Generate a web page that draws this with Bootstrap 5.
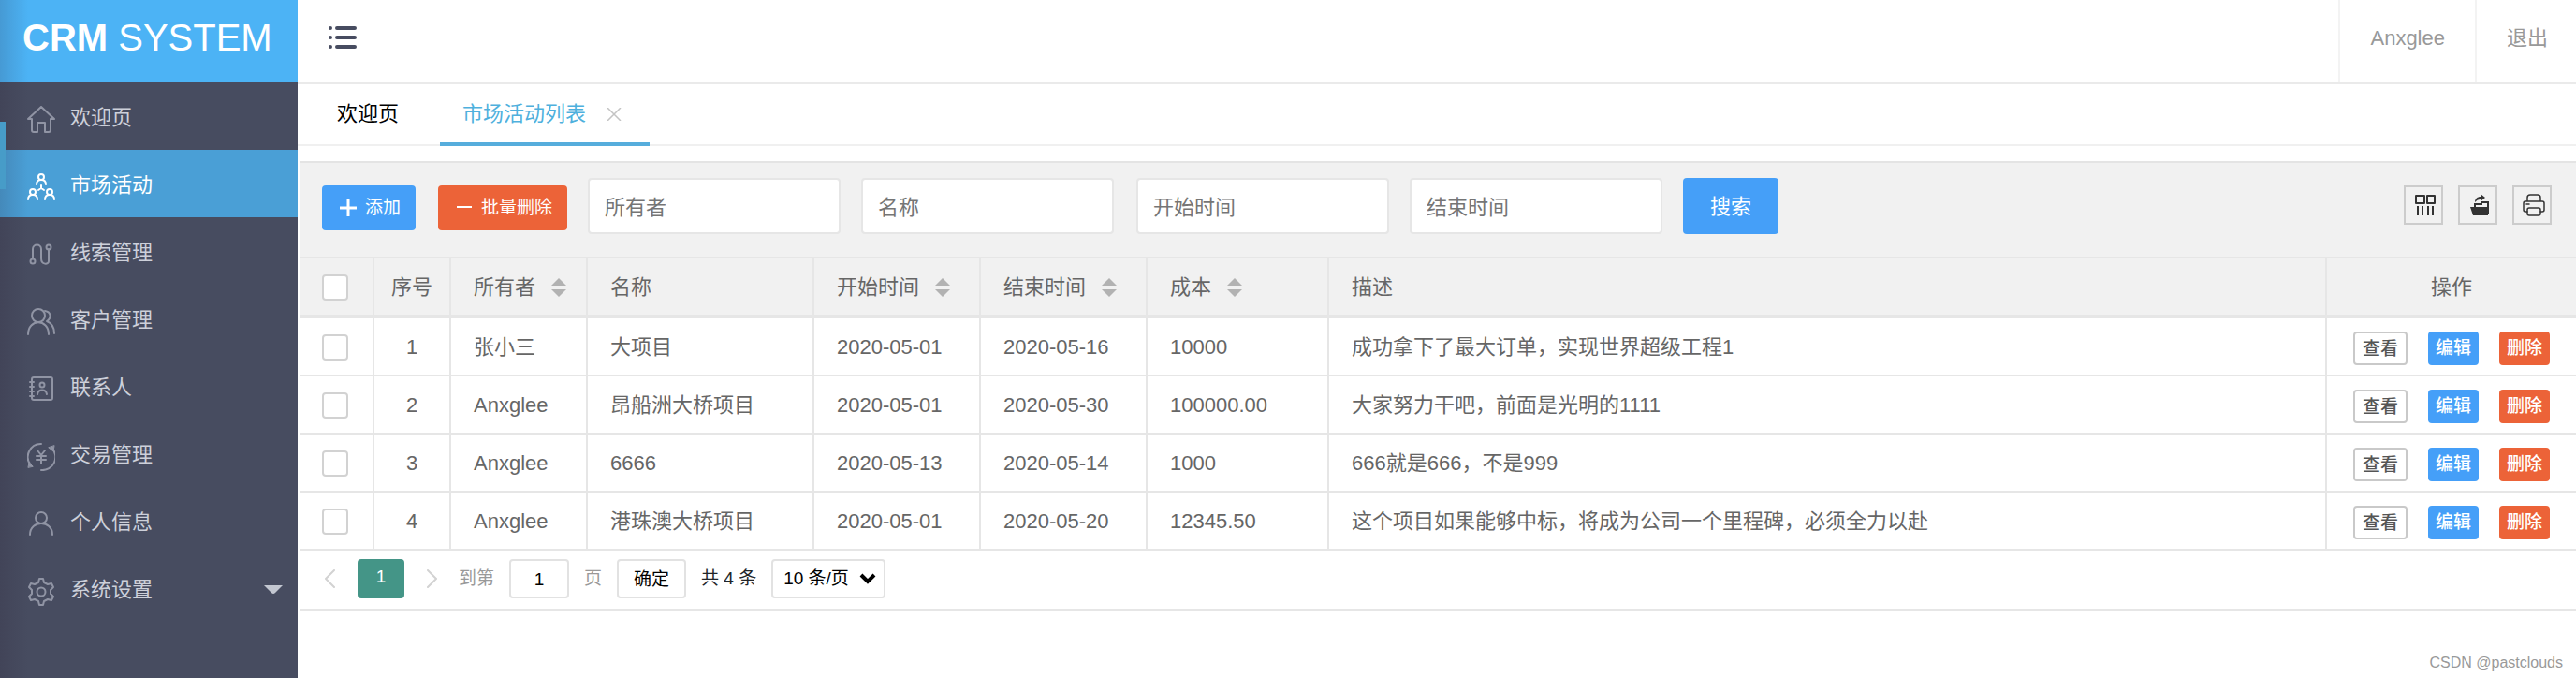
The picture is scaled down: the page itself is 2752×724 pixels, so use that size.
<!DOCTYPE html>
<html lang="zh-CN">
<head>
<meta charset="utf-8">
<meta name="viewport" content="width=device-width, initial-scale=1">
<title>CRM SYSTEM</title>
<link rel="stylesheet" href="https://cdn.jsdelivr.net/npm/bootstrap@5.3.0/dist/css/bootstrap.min.css">
<style>
  body { font-family: "Liberation Sans", "Noto Sans CJK SC", sans-serif; font-size: 22px; line-height: 32px; color: #666; background: #fff; }
  a { text-decoration: none; color: inherit; }
  svg { display: block; flex: none; }
  .line-icon { fill: none; stroke: currentColor; stroke-width: 2; stroke-linecap: round; stroke-linejoin: round; }

  /* sidebar */
  .side-panel { width: 318px; background: #474c60; }
  .side-panel::after { content: ""; position: absolute; inset: 0 auto 0 0; width: 30px; background: linear-gradient(90deg, rgba(40,30,50,.17), rgba(40,30,50,0)); pointer-events: none; }
  .side-logo { height: 88px; padding: 0 24px 8px; font-size: 40px; line-height: 48px; color: #fff; background: #4cb3f5; }
  .side-item { height: 72px; padding: 4px 16px 0 29px; gap: 16px; color: #cdd0da; }
  .side-item .line-icon { color: #9094a4; margin-top: 4px; }
  .side-item.active, .side-item.active .line-icon { color: #fff; }
  .side-item.active { background: #4a9fd6; }
  .side-marker { top: 130px; left: 0; width: 6px; height: 72px; background: #479cc8; z-index: 1; }

  /* top bar and tabs */
  .top-bar { height: 90px; border-bottom: 2px solid #eaeaea; color: #999; }
  .top-link { padding: 0 32px 6px; border-left: 2px solid #f3f3f3; }
  .top-link:last-child { padding-right: 30px; }
  .toggle-btn { padding: 0 33px 8px; color: #474c60; }
  .tab-strip { height: 66px; border-bottom: 2px solid #f0f0f0; padding-left: 18px; color: #000; }
  .tab-entry { padding: 2px 24px 0; height: 66px; border-bottom: 4px solid transparent; }
  .tab-entry.active { color: #4eb0dd; border-color: #56addc; margin-left: 20px; padding-right: 30px; gap: 22px; }
  .tab-close { color: #c4c4c4; }

  /* toolbar */
  .data-view { margin: 16px 0 0 2px; border-top: 2px solid #e4e4e4; }
  .tool-row { min-height: 102px; padding: 16px 26px 24px 24px; background: #f1f1f1; border-bottom: 2px solid #e6e6e6; }
  .act-btn { height: 48px; padding: 0 16px 0 18px; font-size: 19px; line-height: 28px; border: 0; border-radius: 4px; color: #fff; gap: 8px; }
  .act-blue, .act-blue:hover { background: #459ff8; color: #fff; }
  .act-red, .act-red:hover { background: #ec6338; color: #fff; }
  .query-box { width: 270px; height: 60px; padding: 4px 16px 0; border: 2px solid #e6e6e6; border-radius: 4px; font-size: 22px; color: #333; }
  .query-box::placeholder { color: #757575; opacity: 1; }
  .search-btn { width: 102px; height: 60px; padding: 0; font-size: 22px; border: 0; border-radius: 4px; }
  .query-gap { gap: 22px; }
  .sq-btn { width: 42px; height: 42px; padding: 0 0 0 4px; border: 2px solid #ccc; border-radius: 0; color: #333; }

  /* data table */
  .grid-table { table-layout: fixed; border-collapse: separate; border-spacing: 0; margin: 0; }
  .grid-table > :not(caption) > * > * { height: 62px; padding: 2px 24px 0; border: 0 solid #e6e6e6; border-width: 0 2px 2px 0; color: #666; font-weight: 400; vertical-align: middle; background: #fff; box-shadow: none; white-space: nowrap; }
  .grid-table > thead > tr > th { height: 64px; background: #f1f1f1; border-bottom-width: 4px; }
  .grid-table > :not(caption) > tr > :last-child { border-right: 0; }
  .grid-table > :not(caption) > tr > .num-cell { padding: 2px 0 0; text-align: center; }
  .grid-table .form-check-input { display: block; width: 28px; height: 28px; margin: 0; border: 2px solid #d2d2d2; border-radius: 4px; background-color: #fff; }
  .sort-mark { fill: #b2b2b2; }
  .row-ops { gap: 22px; padding-top: 2px; }
  .row-ops .btn { width: 54px; height: 36px; padding: 0; font-size: 19px; line-height: 28px; border: 0; border-radius: 4px; font-weight: 500; }
  .row-ops .view-btn { width: 58px; padding-top: 2px; border: 2px solid #c9c9c9; background: #fff; color: #555; }

  /* paging */
  .pager-row { min-height: 64px; padding: 8px 24px 10px; border-bottom: 2px solid #e6e6e6; font-size: 19px; line-height: 28px; color: #999; }
  .pager-arrow { color: #d2d2d2; }
  .page-now { width: 50px; height: 42px; margin: 0 22px; border-radius: 4px; background: #449587; color: #fff; padding-bottom: 4px; }
  .pager-field { height: 42px; border: 2px solid #e2e2e2; border-radius: 4px; font-size: 19px; line-height: 28px; color: #000; background-color: #fff; padding: 2px 0 0; }
  .pager-field.num { width: 64px; }
  .pager-field.ok { width: 74px; }
  .pager-select { width: 122px; padding: 0 0 0 11px; background-position: right 8px center; background-size: 18px 12px; background-image: url("data:image/svg+xml,%3Csvg xmlns='http://www.w3.org/2000/svg' viewBox='0 0 18 12'%3E%3Cpath d='M2 2l7 7 7-7' fill='none' stroke='%23000' stroke-width='4'/%3E%3C/svg%3E"); }
  .page-mark { padding: 0 14px 6px; font-size: 16px; line-height: 20px; color: #999; }
</style>
</head>
<body>
<div class="d-flex min-vh-100">
  <aside class="side-panel position-relative flex-shrink-0">
    <div class="side-logo d-flex align-items-center text-nowrap"><span><b>CRM</b> SYSTEM</span></div>
    <span class="side-marker position-absolute"></span>
    <nav>
      <a href="#" class="side-item d-flex align-items-center">
        <svg class="line-icon" width="30" height="30" viewBox="0 0 30 30"><path d="M1 14L15 1l14 13h-4v12a2 2 0 0 1-2 2h-4V18h-8v10H7a2 2 0 0 1-2-2V14z"/></svg>欢迎页</a>
      <a href="#" class="side-item active d-flex align-items-center">
        <svg class="line-icon" width="30" height="30" viewBox="0 0 30 30"><circle cx="15" cy="4" r="3"/><path d="M10 12q0-5 5-5t5 5M15 13v3M12 18l3-2 3 2"/><circle cx="6" cy="20" r="3"/><path d="M1 28q0-5 5-5t5 5"/><circle cx="24" cy="20" r="3"/><path d="M19 28q0-5 5-5t5 5"/></svg>市场活动</a>
      <a href="#" class="side-item d-flex align-items-center">
        <svg class="line-icon" width="30" height="30" viewBox="0 0 30 30"><circle cx="6" cy="22" r="2.5"/><path d="M6 19V9c0-6 9-6 9 0v10c0 7 8 7 8 3V9"/><circle cx="23" cy="7" r="2.500"/></svg>线索管理</a>
      <a href="#" class="side-item d-flex align-items-center">
        <svg class="line-icon" width="30" height="30" viewBox="0 0 30 30"><circle cx="12" cy="8" r="7"/><path d="M1 28c0-17 22-17 22 0M19 3c7 1 7 8 2 11 5 2 8 7 8 13"/></svg>客户管理</a>
      <a href="#" class="side-item d-flex align-items-center">
        <svg class="line-icon" width="30" height="30" viewBox="0 0 30 30"><rect x="5" y="2" width="22" height="24" rx="2"/><circle cx="16" cy="10" r="2.500"/><path d="M11 20c1-6 9-6 10 0M3 7h4M3 12h4M3 17h4M3 22h4"/></svg>联系人</a>
      <a href="#" class="side-item d-flex align-items-center">
        <svg class="line-icon" width="30" height="30" viewBox="0 0 30 30"><path d="M15 1A14 14 0 0 0 4 24M15 29A14 14 0 0 0 26 5M11 8l4 5 4-5M10 14h10M10 18h10M15 13v9"/><path d="M1 26l1-5 4 4zM29 3l-1 6-5-4z" fill="currentColor" stroke-width="1"/></svg>交易管理</a>
      <a href="#" class="side-item d-flex align-items-center">
        <svg class="line-icon" width="30" height="30" viewBox="0 0 30 30"><circle cx="15" cy="8" r="6"/><path d="M3 26c0-16 24-16 24 0"/></svg>个人信息</a>
      <a href="#" class="side-item d-flex align-items-center">
        <svg class="line-icon" width="30" height="30" viewBox="0 0 30 30"><path d="M12 5l1-4h4l1 4 4 2 4-1 2 4-3 3v4l3 3-2 4-4-1-4 2-1 4h-4l-1-4-4-2-4 1-2-4 3-3v-4l-3-3 2-4 4 1z"/><circle cx="15" cy="15" r="4.500"/></svg>系统设置
        <svg class="ms-auto" width="20" height="10" viewBox="0 0 20 10"><path d="M0 0h20l-8 8q-2 2-4 0z" fill="#c3c7d1"/></svg></a>
    </nav>
  </aside>

  <div class="d-flex flex-column flex-grow-1">
    <header class="top-bar d-flex align-items-stretch">
      <button type="button" class="toggle-btn btn border-0 rounded-0" aria-label="收起菜单">
        <svg width="30" height="26" viewBox="0 0 30 26" fill="none" stroke="currentColor" stroke-width="4" stroke-linecap="round"><path d="M2 3h0M9 3h19M2 13h0M9 13h19M2 23h0M9 23h19"/></svg></button>
      <a href="#" class="top-link ms-auto d-flex align-items-center">Anxglee</a>
      <a href="#" class="top-link d-flex align-items-center">退出</a>
    </header>

    <nav class="tab-strip d-flex">
      <a href="#" class="tab-entry d-flex align-items-center">欢迎页</a>
      <a href="#" class="tab-entry active d-flex align-items-center">市场活动列表
        <svg class="tab-close" width="16" height="14" viewBox="0 0 16 14" fill="none" stroke="currentColor" stroke-width="1.500"><path d="M1 0l14 14M15 0L1 14"/></svg></a>
    </nav>

    <main class="data-view">
      <form class="tool-row d-flex align-items-start">
        <div class="d-flex align-items-start query-gap">
          <div class="d-flex gap-4 pt-2">
            <button type="button" class="btn act-btn act-blue d-flex align-items-center"><svg width="20" height="20" viewBox="0 0 20 20" stroke="#fff" stroke-width="3"><path d="M1 10h18M10 1v18"/></svg>添加</button>
            <button type="button" class="btn act-btn act-red d-flex align-items-center"><svg width="20" height="20" viewBox="0 0 20 20" stroke="#fff" stroke-width="2"><path d="M2 9h16"/></svg>批量删除</button>
          </div>
          <div class="d-flex gap-4">
            <div class="d-flex query-gap">
              <input class="form-control query-box" type="text" placeholder="所有者" aria-label="所有者">
              <input class="form-control query-box" type="text" placeholder="名称" aria-label="名称">
            </div>
            <div class="d-flex query-gap">
              <input class="form-control query-box" type="text" placeholder="开始时间" aria-label="开始时间">
              <input class="form-control query-box" type="text" placeholder="结束时间" aria-label="结束时间">
              <button type="button" class="btn search-btn act-blue">搜索</button>
            </div>
          </div>
        </div>
        <div class="d-flex gap-3 ms-auto pt-1 mt-1">
          <button type="button" class="btn sq-btn d-flex align-items-center justify-content-center" aria-label="筛选列"><svg class="line-icon" width="24" height="24" viewBox="0 0 24 24"><path d="M2 2h9v8H2zM14 2h8v8h-8zM4 13v10M9 13v10M15 13v10M20 13v10" stroke-linecap="butt"/></svg></button>
          <button type="button" class="btn sq-btn d-flex align-items-center justify-content-center" aria-label="导出"><svg width="24" height="24" viewBox="0 0 24 24"><path d="M2 14h19v9H5z" fill="#333"/><path d="M7 14v-3h7V9h7v13" fill="none" stroke="#333" stroke-width="2"/><path d="M7 9c0-4 3-6 6-6V0l5 4-5 4V6c-3 0-4 1-6 3z" fill="#333"/></svg></button>
          <button type="button" class="btn sq-btn d-flex align-items-center justify-content-center" aria-label="打印"><svg class="line-icon" width="24" height="24" viewBox="0 0 24 24" style="stroke-width:1.500"><path d="M5 8V4q0-3 3-3h8q3 0 3 3v4M5 19H3q-2 0-2-2v-7q0-2 2-2h18q2 0 2 2v7q0 2-2 2h-2M4 11h3"/><rect x="5" y="15" width="14" height="8" rx="2"/></svg></button>
        </div>
      </form>

      <table class="table grid-table">
        <colgroup>
          <col style="width:80px"><col style="width:82px"><col style="width:146px"><col style="width:242px"><col style="width:178px"><col style="width:178px"><col style="width:194px"><col><col style="width:266px">
        </colgroup>
        <thead>
          <tr>
            <th><input class="form-check-input" type="checkbox" aria-label="全选"></th>
            <th class="num-cell">序号</th>
            <th><span class="d-flex align-items-center gap-3">所有者<svg class="sort-mark" width="18" height="20" viewBox="0 0 18 20"><path d="M1 8l8-8 8 8zM1 12h16l-8 8z"/></svg></span></th>
            <th>名称</th>
            <th><span class="d-flex align-items-center gap-3">开始时间<svg class="sort-mark" width="18" height="20" viewBox="0 0 18 20"><path d="M1 8l8-8 8 8zM1 12h16l-8 8z"/></svg></span></th>
            <th><span class="d-flex align-items-center gap-3">结束时间<svg class="sort-mark" width="18" height="20" viewBox="0 0 18 20"><path d="M1 8l8-8 8 8zM1 12h16l-8 8z"/></svg></span></th>
            <th><span class="d-flex align-items-center gap-3">成本<svg class="sort-mark" width="18" height="20" viewBox="0 0 18 20"><path d="M1 8l8-8 8 8zM1 12h16l-8 8z"/></svg></span></th>
            <th>描述</th>
            <th class="text-center">操作</th>
          </tr>
        </thead>
        <tbody>
          <tr>
            <td><input class="form-check-input" type="checkbox" aria-label="选择第1行"></td><td class="num-cell">1</td><td>张小三</td><td>大项目</td><td>2020-05-01</td><td>2020-05-16</td><td>10000</td><td>成功拿下了最大订单，实现世界超级工程1</td>
            <td><div class="row-ops d-flex justify-content-center"><button type="button" class="btn view-btn">查看</button><button type="button" class="btn act-blue">编辑</button><button type="button" class="btn act-red">删除</button></div></td>
          </tr>
          <tr>
            <td><input class="form-check-input" type="checkbox" aria-label="选择第2行"></td><td class="num-cell">2</td><td>Anxglee</td><td>昂船洲大桥项目</td><td>2020-05-01</td><td>2020-05-30</td><td>100000.00</td><td>大家努力干吧，前面是光明的1111</td>
            <td><div class="row-ops d-flex justify-content-center"><button type="button" class="btn view-btn">查看</button><button type="button" class="btn act-blue">编辑</button><button type="button" class="btn act-red">删除</button></div></td>
          </tr>
          <tr>
            <td><input class="form-check-input" type="checkbox" aria-label="选择第3行"></td><td class="num-cell">3</td><td>Anxglee</td><td>6666</td><td>2020-05-13</td><td>2020-05-14</td><td>1000</td><td>666就是666，不是999</td>
            <td><div class="row-ops d-flex justify-content-center"><button type="button" class="btn view-btn">查看</button><button type="button" class="btn act-blue">编辑</button><button type="button" class="btn act-red">删除</button></div></td>
          </tr>
          <tr>
            <td><input class="form-check-input" type="checkbox" aria-label="选择第4行"></td><td class="num-cell">4</td><td>Anxglee</td><td>港珠澳大桥项目</td><td>2020-05-01</td><td>2020-05-20</td><td>12345.50</td><td>这个项目如果能够中标，将成为公司一个里程碑，必须全力以赴</td>
            <td><div class="row-ops d-flex justify-content-center"><button type="button" class="btn view-btn">查看</button><button type="button" class="btn act-blue">编辑</button><button type="button" class="btn act-red">删除</button></div></td>
          </tr>
        </tbody>
      </table>

      <div class="pager-row d-flex align-items-center">
        <a href="#" class="pager-arrow" aria-label="上一页"><svg class="line-icon" width="16" height="20" viewBox="0 0 16 20"><path d="M13 1l-9 9 9 9"/></svg></a>
        <a href="#" class="page-now d-flex align-items-center justify-content-center">1</a>
        <a href="#" class="pager-arrow" aria-label="下一页"><svg class="line-icon" width="16" height="20" viewBox="0 0 16 20"><path d="M3 1l9 9-9 9"/></svg></a>
        <label class="d-flex align-items-center gap-3 ms-3 ps-1">到第<input class="pager-field num text-center" type="text" value="1">页</label>
        <button type="button" class="pager-field ok ms-3">确定</button>
        <span class="ms-3 text-dark">共 4 条</span>
        <select class="form-select pager-field pager-select ms-3" aria-label="每页条数"><option>10 条/页</option></select>
      </div>
    </main>
    <footer class="page-mark mt-auto text-end">CSDN @pastclouds</footer>
  </div>
</div>
<script src="https://cdn.jsdelivr.net/npm/bootstrap@5.3.0/dist/js/bootstrap.bundle.min.js"></script>
</body>
</html>
